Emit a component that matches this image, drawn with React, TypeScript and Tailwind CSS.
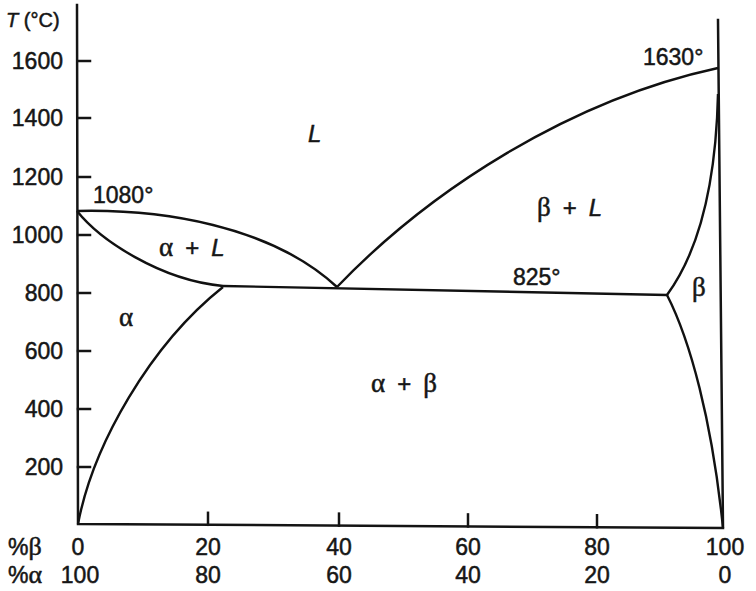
import React from 'react';

// phase boundaries, hand fitted cubic curves
const curves = [
  'M77,211 C160,209 270,225 337,287', // liquidus, alpha side
  'M77,211 C100,240 160,280 223,286', // solidus, alpha side
  'M223,287 C150,345 93,445 78,524', // solvus, alpha side
  'M337,287 C430,190 570,100 718,68', // liquidus, beta side
  'M718,94 C716,180 700,250 667,295', // solidus, beta side
  'M667,295 C690,340 712,420 723,528', // solvus, beta side
  'M223,286 L667,295', // eutectic
];

const yTicks = [
  { label: '1600', y: 61 },
  { label: '1400', y: 118 },
  { label: '1200', y: 177 },
  { label: '1000', y: 235 },
  { label: '800', y: 293 },
  { label: '600', y: 351 },
  { label: '400', y: 409 },
  { label: '200', y: 467 },
];

const xTicks = [
  { beta: '0', alpha: '100', x: 78, tick: false },
  { beta: '20', alpha: '80', x: 208, tick: true },
  { beta: '40', alpha: '60', x: 339, tick: true },
  { beta: '60', alpha: '40', x: 468, tick: true },
  { beta: '80', alpha: '20', x: 597, tick: true },
  { beta: '100', alpha: '0', x: 725, tick: false },
];

const axisY = (x: number) => 524 + ((x - 78) * 4) / 645;

const serif = "font-['Liberation_Serif',serif]";
const plus = '\u2002+\u2002';

export default function App() {
  return (
    <div className="w-[756px] h-[591px] bg-white overflow-hidden">
      <svg
        width={756}
        height={591}
        viewBox="0 0 756 591"
        className="block fill-[#161616] font-['Liberation_Sans',Arial,sans-serif] text-[23px]"
      >
        {/* axes */}
        <g stroke="#141414" strokeWidth={2.5} fill="none" strokeLinecap="square">
          <path d="M77,5 L78,524 L723,528 L718,20" />
          {yTicks.map(t => (
            <line key={t.label} x1={78} y1={t.y} x2={90} y2={t.y} />
          ))}
          {xTicks.filter(t => t.tick).map(t => (
            <line key={t.beta} x1={t.x} y1={axisY(t.x)} x2={t.x} y2={axisY(t.x) - 12} />
          ))}
        </g>

        <g stroke="#111" strokeWidth={2.4} fill="none" strokeLinejoin="round">
          {curves.map((d, i) => (
            <path key={i} d={d} />
          ))}
        </g>

        <g stroke="#161616" strokeWidth={0.5}>
          <text x={6} y={27} className="text-[20px]">
            <tspan className="italic">T</tspan> (°C)
          </text>

          {yTicks.map(t => (
            <text key={t.label} x={63} y={t.y + 8} textAnchor="end">
              {t.label}
            </text>
          ))}

          <text x={8} y={555}>
            %<tspan className={`${serif} text-[26px]`}>β</tspan>
          </text>
          <text x={8} y={583}>
            %<tspan className={`${serif} text-[26px]`}>α</tspan>
          </text>
          {xTicks.map(t => (
            <g key={t.beta}>
              <text x={t.x} y={555} textAnchor="middle">{t.beta}</text>
              <text x={t.x === 78 ? 80 : t.x} y={583} textAnchor="middle">{t.alpha}</text>
            </g>
          ))}

          {/* temperatures */}
          <text x={93} y={203}>1080°</text>
          <text x={643} y={65}>1630°</text>
          <text x={513} y={285}>825°</text>

          {/* phase regions */}
          <g className="text-[24px]">
            <text x={308} y={142} className="italic">L</text>
            <text x={159} y={256}>
              <tspan className={`${serif} text-[27px]`}>α</tspan>{plus}<tspan className="italic">L</tspan>
            </text>
            <text x={119} y={326} className={`${serif} text-[27px]`}>α</text>
            <text x={537} y={216}>
              <tspan className={`${serif} text-[27px]`}>β</tspan>{plus}<tspan className="italic">L</tspan>
            </text>
            <text x={692} y={296} className={`${serif} text-[27px]`}>β</text>
            <text x={371} y={392}>
              <tspan className={`${serif} text-[27px]`}>α</tspan>{plus}<tspan className={`${serif} text-[27px]`}>β</tspan>
            </text>
          </g>
        </g>
      </svg>
    </div>
  );
}
